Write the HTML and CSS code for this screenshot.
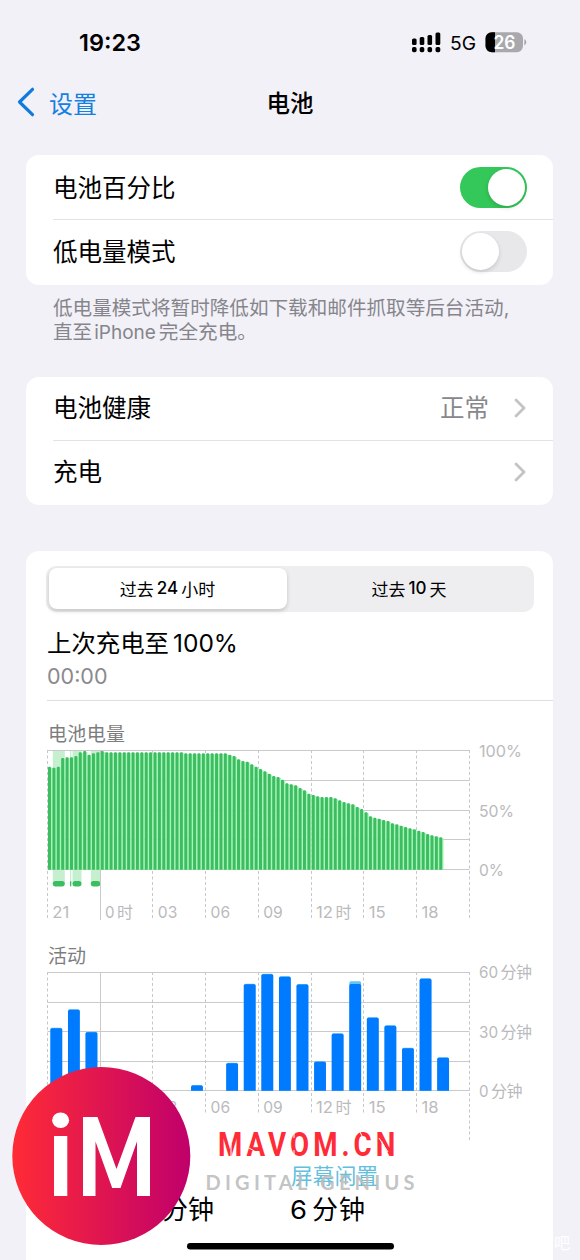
FILE: index.html
```html
<!DOCTYPE html>
<html lang="zh-CN">
<head>
<meta charset="utf-8">
<title>电池</title>
<link rel="stylesheet" href="styles.css">
</head>
<body>
<main class="phone">
  <header class="status">
    <svg width="580" height="70" viewBox="0 0 580 70">
      <text class="clock" x="79" y="51" textLength="62" lengthAdjust="spacingAndGlyphs">19:23</text>
      <g fill="#000">
        <rect x="412" y="38.5" width="4.6" height="6.5" rx="1.5"/><rect x="419.7" y="37" width="4.6" height="8" rx="1.5"/><rect x="427.5" y="35" width="4.6" height="10" rx="1.5"/><rect x="435.5" y="32.5" width="4.8" height="12.5" rx="1.5"/>
        <rect x="412" y="47" width="4.6" height="5.3" rx="1.7"/><rect x="419.7" y="47" width="4.6" height="5.3" rx="1.7"/><rect x="427.5" y="47" width="4.6" height="5.3" rx="1.7"/><rect x="435.5" y="47" width="4.8" height="5.3" rx="1.7"/>
      </g>
      <text class="net" x="450" y="50.3" textLength="26" lengthAdjust="spacingAndGlyphs">5G</text>
      <clipPath id="charge"><rect x="485" y="32" width="10" height="21"/></clipPath>
      <rect x="485.5" y="32.3" width="37.5" height="20" rx="6.2" fill="#a9a9ad"/>
      <rect x="485.5" y="32.3" width="37.5" height="20" rx="6.2" clip-path="url(#charge)"/>
      <path d="M524.3 39v6.5q2-.7 2-3.2t-2-3.3z" fill="#a9a9ad"/>
      <text class="level" x="493.500" y="49" textLength="22" lengthAdjust="spacingAndGlyphs">26</text>
    </svg>
  </header>

  <nav class="nav">
    <a class="back"><svg width="18" height="30" viewBox="0 0 18 30"><path d="M15.5 2.3 2.5 15l13 12.7" fill="none" stroke="#0f7be0" stroke-width="3.2" stroke-linecap="round" stroke-linejoin="round"/></svg><span>设置</span></a>
    <h1>电池</h1>
  </nav>

  <section class="card toggles">
    <div class="row"><span>电池百分比</span><i class="switch on"></i></div>
    <div class="row"><span>低电量模式</span><i class="switch"></i></div>
  </section>
  <p class="note">低电量模式将暂时降低如下载和邮件抓取等后台活动,<br>直至<span class="latin">iPhone</span>完全充电。</p>

  <section class="card links">
    <div class="row"><span>电池健康</span><span class="value">正常</span><svg class="chev" width="12" height="20" viewBox="0 0 12 20"><path d="m2 2 8 8-8 8" /></svg></div>
    <div class="row"><span>充电</span><svg class="chev" width="12" height="20" viewBox="0 0 12 20"><path d="m2 2 8 8-8 8" /></svg></div>
  </section>

  <section class="card usage">
    <div class="segments">
      <div class="segment active">过去<b>24</b>小时</div>
      <div class="segment">过去<b>10</b>天</div>
    </div>
    <div class="last">
      <h2>上次充电至<span>100%</span></h2>
      <p>00:00</p>
    </div>
    <svg class="charts" width="527" height="559" viewBox="26 701 527 559">
      <g id="level"></g>
      <g id="activity"></g>
      <text class="idle" x="291" y="1184" textLength="87">屏幕闲置</text>
      <text class="mins" x="162" y="1219" textLength="52">分钟</text>
      <text class="mins" x="290" y="1219" textLength="17" lengthAdjust="spacingAndGlyphs">6</text><text class="mins" x="312" y="1219" textLength="53">分钟</text>
    </svg>
  </section>

  <svg class="mark" width="580" height="210" viewBox="0 1050 580 210">
    <defs><linearGradient id="disc"><stop offset="0" stop-color="#ff2b36"/><stop offset="1" stop-color="#c0006b"/></linearGradient></defs>
    <circle cx="101.3" cy="1156" r="89" fill="url(#disc)"/>
    <ellipse cx="60.6" cy="1120.2" rx="8.5" ry="7.8" fill="#fff"/>
    <path d="M54 1136h13.3v60H54z" fill="#fff"/>
    <path d="M83 1196v-79h14.5l19 52 19-52H150v79h-13v-54.500l-16.500 46.500h-8.300l-16.700-46.500v54.500z" fill="#fff"/>
    <g transform="translate(218 1156) scale(.84 1)"><text class="brand" x="0" y="0" textLength="211">MAVOM.CN</text></g>
    <path class="cuts" d="M231 1144v12M249 1148l7 4M269 1146l6 10M294 1132v6M294 1150v6M331 1144v12M360 1132l3 6M379 1138l9 14"/>
    <text class="tag" x="205.500" y="1189.700" textLength="209">DIGITAL GENIUS</text>
    <text class="corner" x="554" y="1249">吧</text>
    <rect x="187" y="1243" width="207" height="6.500" rx="3.250"/>
  </svg>
</main>
<script src="charts.js"></script>
</body>
</html>
```
FILE: styles.css
```css
* { box-sizing: border-box; }
body { margin: 0; font-family: Inter, "Noto Sans CJK SC", sans-serif; color: #000; }
.phone { position: relative; width: 580px; height: 1260px; overflow: hidden; background: #f2f1f7; }
svg { display: block; flex: none; }
.status { height: 70px; }
.clock { font-size: 23px; font-weight: 600; }
.net { font-size: 19px; }
.level { font-size: 18px; font-weight: 600; fill: #fff; }
.nav { display: grid; grid-template-columns: 220px 140px 220px; align-items: center; height: 64px; }
.back { display: flex; align-items: center; gap: 14px; padding-left: 17px; color: #1580e0; font-size: 24px; }
.nav h1 { margin: 0; text-align: center; font-size: 23.500px; font-weight: 500; }
.card { width: 527px; margin-left: 26px; background: #fff; border-radius: 13px; }
.toggles { margin-top: 21px; height: 129.500px; }
.links { margin-top: 31.500px; height: 127.500px; }
.row { display: flex; align-items: center; height: 64px; margin-left: 27px; padding-right: 26px; font-size: 24.500px; line-height: 1; }
.row > span:first-child { flex: 1; }
.row + .row { border-top: 1px solid #e3e3e5; }
.toggles .row > span { padding-top: 2px; }
.links .row:first-child { height: 62.500px; }
.switch { display: flex; width: 67px; height: 41px; padding: 2px; border-radius: 21px; background: #e8e8ea; }
.switch::before { content: ""; width: 37px; height: 37px; border-radius: 50%; background: #fff; box-shadow: 0 2px 4px rgba(0,0,0,.15); }
.switch.on { justify-content: flex-end; background: #34c759; }
.value { color: #88888b; margin-right: 25px; }
.chev { margin-right: 1px; fill: none; stroke: #c3c3c6; stroke-width: 2.800; stroke-linecap: round; stroke-linejoin: round; }
.note { height: 50px; margin: 11px 0 0 53px; font-size: 19.600px; line-height: 24px; color: #85858b; white-space: nowrap; }
.latin { margin: 0 3px 0 2px; font-size: 19px; }
.usage { height: 709px; margin-top: 46px; padding-top: 15px; border-radius: 13px 13px 0 0; }
.segments { display: flex; width: 488px; height: 46px; margin-left: 20px; padding: 2.500px; border-radius: 10px; background: #eeeef0; }
.segment { display: flex; flex: 1; align-items: center; justify-content: center; padding-bottom: 1px; font-size: 17px; font-weight: 400; border-radius: 8px; }
.segment b { margin: 0 3px; font-weight: 500; font-size: 17px; }
.segment.active { flex: 0 0 238px; background: #fff; box-shadow: 0 2px 4px rgba(0,0,0,.18); }
.last { height: 89px; margin-left: 21px; padding-top: 15px; border-bottom: 1px solid #dedee0; }
.last h2 { margin: 0; font-size: 24.400px; font-weight: 400; line-height: 33px; }
.last h2 span { margin-left: 4px; font-size: 24.500px; }
.last p { margin: 0; color: #8a8a8d; font-size: 21.500px; line-height: 33px; }
.charts text, .mark text { white-space: pre; }
.title { font-size: 19px; fill: #7d7d80; }
.axis { font-size: 16px; fill: #bababd; }
.grid { stroke: #cacacd; stroke-width: 1; fill: none; }
.dash { stroke: #c7c7ca; stroke-width: 1; stroke-dasharray: 3 2.500; }
.idle { font-size: 21.500px; fill: #64bfdf; }
.mins { font-size: 26px; }
.mark { position: absolute; left: 0; bottom: 0; }
.brand { font-family: Roboto, sans-serif; font-size: 33px; font-weight: 700; fill: #ff2b36; }
.cuts { stroke: #fff; stroke-width: 1; fill: none; }
.tag { font-family: Lato, sans-serif; font-size: 20px; font-weight: 700; fill: #bcbcbc; fill-opacity: .9; }
.corner { font-size: 16px; fill: #fff; }
```
FILE: charts.js
```js
const NS = 'http://www.w3.org/2000/svg';
const LEFT = 47.5, RIGHT = 469.5, HOUR = 17.583;

function add(parent, tag, attrs, text) {
  const el = document.createElementNS(NS, tag);
  for (const key in attrs) el.setAttribute(key, attrs[key]);
  if (text) el.textContent = text;
  parent.appendChild(el);
}

function grid(parent, top, bottom, end, lastEnd) {
  for (let i = 0; i < 5; i++) {
    const y = Math.round(top + (bottom - top) * i / 4) + .5;
    add(parent, 'path', { class: 'grid', d: `M${LEFT} ${y}H${RIGHT}` });
  }
  for (let i = 0; i < 9; i++) {
    const x = Math.floor(LEFT + i * HOUR * 3) + .5;
    add(parent, 'path', { class: i === 1 ? 'grid' : 'dash', d: `M${x} ${top}V${i === 8 ? lastEnd : end}` });
  }
}

function label(parent, x, y, number, numWidth, unit, unitWidth) {
  add(parent, 'text', { class: 'axis', x, y, textLength: numWidth, lengthAdjust: 'spacingAndGlyphs' }, number);
  if (unit) add(parent, 'text', { class: 'axis', x: x + numWidth + 2.5, y, textLength: unitWidth }, unit);
}

function hours(parent, y, skip) {
  ['21', '0', '03', '06', '09', '12', '15', '18'].forEach((n, i) => {
    if (i < skip) return;
    const unit = n === '0' || n === '12' ? '时' : '';
    label(parent, 52.3 + i * HOUR * 3, y, n, n === '0' ? 9.5 : n[0] === '0' ? 19.5 : 17, unit, 15);
  });
}

const level = document.getElementById('level');
add(level, 'text', { class: 'title', x: 48, y: 741, textLength: 77 }, '电池电量');
[[52.8, 12], [70, 1.3], [72.5, 9], [90.8, 9.5]].forEach(([x, width]) => {
  add(level, 'rect', { x, y: 751, width, height: 133, fill: '#c5efcf' });
  add(level, 'rect', { x, y: 881, width, height: 5.5, rx: Math.min(width / 2, 2.7), fill: '#3cbd60' });
});
grid(level, 750, 869, 920, 920);
const tops = [155,158,155,129,127,127,123,112,108,119,115,112,108,
  ...Array(18).fill(112), ...Array(10).fill(115),
  119,123,133,138,140,148,155,162,169,176,183,186,194,205,208,211,219,226,236,240,244,246,246,246,
  250,256,261,265,268,276,282,292,304,308,311,315,318,325,328,332,336,340,343,347,351,357,361,364,367];
tops.forEach((t, i) => {
  const y = 715 + t / 3, x = 48 + i * 4.396;
  add(level, 'rect', { x, y: y + 1, width: 4.3, height: 868.7 - y, fill: '#a6f5b6' });
  add(level, 'path', { fill: '#3dbd62', d: `M${x} 869.7V${y + 1}q0-1 1-1h1q1 0 1 1V869.7z` });
});
hours(level, 918, 0);
label(level, 479, 757, '100%', 43);
label(level, 479, 816.5, '50%', 35);
label(level, 479, 875.5, '0%', 25);

const activity = document.getElementById('activity');
add(activity, 'text', { class: 'title', x: 48, y: 962.5, textLength: 38 }, '活动');
grid(activity, 972, 1090, 1114, 1141);
const bars = { 0: 278, 1: 223, 2: 290, 8: 450, 10: 383, 11: 146, 12: 116, 13: 124, 14: 147,
  15: 379, 16: 295, 17: 139, 18: 247, 19: 271, 20: 338, 21: 130, 22: 367 };
for (const i in bars) {
  const x = 50.4 + i * HOUR, y = 935 + bars[i] / 3;
  const draw = (top, fill) => add(activity, 'path', { fill, d: `M${x} 1090.7V${top + 1.7}q0-1.7 1.7-1.7h8.4q1.7 0 1.7 1.7V1090.7z` });
  draw(y, '#64c4ee');
  draw(y + (i === '17' ? 2.7 : .5), '#007aff');
}
hours(activity, 1113, 2);
label(activity, 479, 978, '60', 19, '分钟', 31.5);
label(activity, 479, 1037.5, '30', 19, '分钟', 31.5);
label(activity, 479, 1097, '0', 9.5, '分钟', 31.5);
```
